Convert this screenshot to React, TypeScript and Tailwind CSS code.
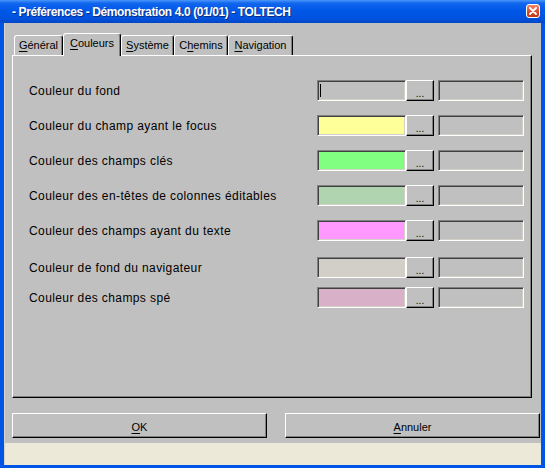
import React from 'react'

const rows = [
  { label: 'Couleur du fond', color: '#c0c0c0', cursor: true, mt: 'mt-[24px]' },
  { label: 'Couleur du champ ayant le focus', color: '#ffff99', mt: 'mt-[14px]' },
  { label: 'Couleur des champs clés', color: '#80ff80', mt: 'mt-[14px]' },
  { label: 'Couleur des en-têtes de colonnes éditables', color: '#b0d4b0', mt: 'mt-[14px]' },
  { label: 'Couleur des champs ayant du texte', color: '#ff99ff', mt: 'mt-[14px]' },
  { label: 'Couleur de fond du navigateur', color: '#d2cec8', mt: 'mt-[16px]' },
  { label: 'Couleur des champs spé', color: '#d8b0c8', mt: 'mt-[9px]' },
]

const tabs = [
  { pre: '', key: 'G', post: 'énéral', w: 'w-[49px]' },
  { pre: '', key: 'C', post: 'ouleurs', w: 'w-[58px]', active: true },
  { pre: '', key: 'S', post: 'ystème', w: 'w-[53px]' },
  { pre: 'C', key: 'h', post: 'emins', w: 'w-[54px]' },
  { pre: '', key: 'N', post: 'avigation', w: 'w-[65px]' },
]

const sunken =
  'border border-t-[#808080] border-l-[#808080] border-b-white border-r-white shadow-[inset_1px_1px_0_#404040,inset_-1px_-1px_0_#d4d0c8]'
const raised =
  'border border-t-white border-l-white border-b-black border-r-black shadow-[inset_-1px_-1px_0_#808080]'

function Tab({ t }: { t: (typeof tabs)[number] }) {
  return (
    <div
      className={
        t.active
          ? `${t.w} h-[23px] -mb-px relative z-10 bg-[#c0c0c0] border-l border-t border-white border-r border-r-black rounded-t-[3px] shadow-[inset_-1px_0_0_#808080] flex items-start justify-center pt-[3px]`
          : `${t.w} h-[20px] bg-[#c0c0c0] border-l border-t border-white border-r border-r-black rounded-t-[3px] shadow-[inset_-1px_0_0_#808080] flex items-start justify-center pt-[3px]`
      }
    >
      <span className="text-[11px] leading-[13px] text-black">
        {t.pre}
        <span className="underline underline-offset-2">{t.key}</span>
        {t.post}
      </span>
    </div>
  )
}

export default function App() {
  return (
    <div
      className="w-[545px] h-[468px] flex flex-col bg-[#0055e5] overflow-hidden"
      style={{ fontFamily: '"Liberation Sans", Arial, sans-serif' }}
    >
      {/* title bar */}
      <div className="h-[23px] shrink-0 flex items-center justify-between pl-[12px] pr-[5px] bg-[linear-gradient(to_bottom,#4a96fa_0%,#1266ee_14%,#0058e8_45%,#0052de_80%,#0246c4_100%)]">
        <span className="text-white font-bold text-[12px] tracking-[-0.4px] pt-px [text-shadow:1px_1px_0_#0a2a80]">
          - Préférences - Démonstration 4.0 (01/01) - TOLTECH
        </span>
        <div className="w-[14px] h-[14px] mb-[2px] rounded-[3px] border border-white bg-[linear-gradient(to_bottom,#f08a6a,#d8482a_60%,#c0381a)] flex items-center justify-center">
          <svg width="8" height="8" viewBox="0 0 8 8">
            <path d="M1 1 L7 7 M7 1 L1 7" stroke="white" strokeWidth="1.8" strokeLinecap="round" />
          </svg>
        </div>
      </div>

      {/* body */}
      <div className="flex-1 flex flex-col mx-[4px] bg-[#c0c0c0] border-l border-[#d8d4cc]">
        <div className="h-[10px]" />
        {/* tabs */}
        <div className="h-[22px] flex items-end pl-[9px]">
          {tabs.map((t) => (
            <Tab key={t.post} t={t} />
          ))}
        </div>

        {/* panel */}
        <div className="ml-[7px] w-[520px] h-[343px] border-l border-t border-white border-r border-b border-r-black border-b-black shadow-[inset_-1px_-1px_0_#808080] flex flex-col pl-[16px] pr-[7px]">
          {rows.map((r) => (
            <div key={r.label} className={`${r.mt} h-[21px] flex items-center`}>
              <span className="flex-1 text-[12px] tracking-[0.4px] text-black">{r.label}</span>
              <div className={`w-[89px] h-[21px] ${sunken} relative`} style={{ backgroundColor: r.color }}>
                {r.cursor && <div className="absolute left-[2px] top-[3px] w-px h-[13px] bg-black" />}
              </div>
              <div className={`w-[28px] h-[21px] bg-[#c0c0c0] ${raised} flex items-end justify-center pb-px`}>
                <span className="text-[10px] leading-[10px] text-black">...</span>
              </div>
              <div className={`ml-[4px] w-[86px] h-[21px] bg-[#c0c0c0] ${sunken}`} />
            </div>
          ))}
        </div>

        {/* buttons */}
        <div className="mt-[15px] h-[25px] flex pl-[7px] gap-[18px]">
          <div className={`w-[255px] h-[25px] bg-[#c0c0c0] ${raised} flex items-center justify-center pt-[3px]`}>
            <span className="text-[11px] text-black">
              <span className="underline underline-offset-2">O</span>K
            </span>
          </div>
          <div className={`w-[255px] h-[25px] bg-[#c0c0c0] ${raised} flex items-center justify-center pt-[3px]`}>
            <span className="text-[11px] text-black">
              <span className="underline underline-offset-2">A</span>nnuler
            </span>
          </div>
        </div>

        <div className="h-[5px]" />
        <div className="h-[22px] bg-[#ece9d8]" />
      </div>
      <div className="h-[3px] shrink-0" />
    </div>
  )
}
